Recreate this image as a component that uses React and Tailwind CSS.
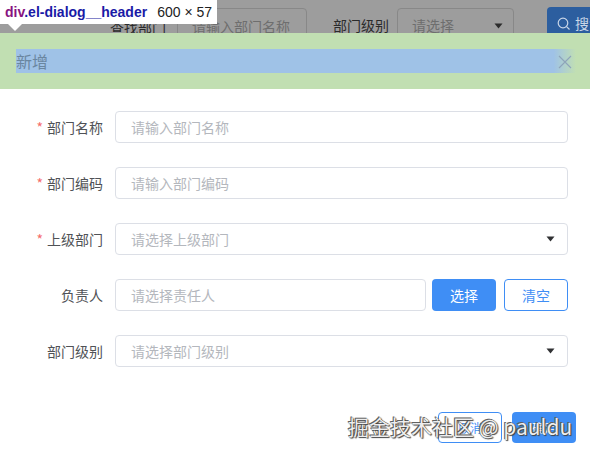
import React from "react";

const cjk = { fontFamily: '"Noto Sans CJK SC", "Noto Sans", sans-serif' };

function Arrow() {
  return (
    <svg width="9" height="6" viewBox="0 0 9 6" className="shrink-0">
      <path d="M0.5 0.5 L8.5 0.5 L4.5 5.5 Z" fill="#303133" />
    </svg>
  );
}

function Row({ label, required, placeholder, select, children }) {
  return (
    <div className="flex items-center h-[32px] mb-6">
      <div className="w-[115px] pr-[12px] text-right text-[14px] text-[#505256] shrink-0">
        {required && <span className="text-[#f56c6c] mr-[4px]">*</span>}
        {label}
      </div>
      {children ? (
        children
      ) : (
        <div className="w-[453px] h-[32px] border border-[#dcdfe6] rounded-[4px] flex items-center justify-between pl-[15px] pr-[12px]">
          <span className="text-[14px] text-[#b4b7bd]">{placeholder}</span>
          {select && <Arrow />}
        </div>
      )}
    </div>
  );
}

export default function App() {
  return (
    <div className="relative w-[590px] h-[453px] overflow-hidden bg-white" style={cjk}>
      {/* masked page behind */}
      <div className="h-[33px] bg-[#9d9d9d] relative overflow-hidden">
        <span className="absolute left-[110px] top-[17px] text-[14px] text-[#2b2b2b]">查找部门</span>
        <div className="absolute left-[177px] top-[8px] w-[130px] h-[32px] border border-[#888] rounded-[4px] pl-[14px] pt-[7px] text-[14px] text-[#6e6e6e]">请输入部门名称</div>
        <span className="absolute left-[333px] top-[15px] text-[14px] text-[#2b2b2b]">部门级别</span>
        <div className="absolute left-[397px] top-[8px] w-[117px] h-[32px] border border-[#888] rounded-[4px] pl-[14px] pr-[10px] flex items-start justify-between pt-[6px]">
          <span className="text-[14px] text-[#6e6e6e]">请选择</span>
          <svg width="9" height="6" viewBox="0 0 9 6" className="mt-[8px]">
            <path d="M0.5 0.5 L8.5 0.5 L4.5 5.5 Z" fill="#2b2b2b" />
          </svg>
        </div>
        <div className="absolute left-[547px] top-[7px] w-[70px] h-[32px] bg-[#2c5e9f] rounded-[4px] flex items-start pt-[6px] pl-[10px] gap-[4px] text-[14px] text-[#c9d6e8]">
          <svg width="14" height="14" viewBox="0 0 14 14" className="mt-[4px]">
            <circle cx="6" cy="6" r="4.8" fill="none" stroke="#c9d6e8" strokeWidth="1.2" />
            <path d="M9.6 9.6 L12.5 12.5" stroke="#c9d6e8" strokeWidth="1.2" />
          </svg>
          <span>搜索</span>
        </div>
      </div>

      {/* tooltip */}
      <div className="absolute left-0 top-0 z-20">
        <div className="w-[217px] h-[24px] bg-white flex items-center pl-[5px] gap-[10px] text-[14px]" style={{ fontFamily: '"Liberation Sans", Arial, sans-serif' }}>
          <span className="font-bold">
            <span className="text-[#881280]">div</span>
            <span className="text-[#1a1aa6]">.el-dialog__header</span>
          </span>
          <span className="text-[#222]">600 × 57</span>
        </div>
        <div className="ml-[8px] w-0 h-0 border-l-[7px] border-r-[7px] border-t-[7px] border-l-transparent border-r-transparent border-t-white" />
      </div>

      {/* dialog header (highlighted) */}
      <div className="relative h-[56px] bg-[#c1dfb2] px-[16px] py-[16px]">
        <div className="w-[560px] h-[24px] bg-[linear-gradient(to_right,#9fc2e7_96%,#c1dfb2)] flex items-center">
          <span className="text-[16px] leading-[24px] text-[#6a86a0]">新增</span>
        </div>
        <svg className="absolute left-[558px] top-[22px]" width="14" height="14" viewBox="0 0 14 14">
          <path d="M1 1 L13 13 M13 1 L1 13" stroke="#8ea4ba" strokeWidth="1.1" />
        </svg>
      </div>

      {/* dialog body */}
      <div className="pt-[22px]">
        <Row label="部门名称" required placeholder="请输入部门名称" />
        <Row label="部门编码" required placeholder="请输入部门编码" />
        <Row label="上级部门" required placeholder="请选择上级部门" select />
        <Row label="负责人">
          <div className="flex items-center">
            <div className="w-[311px] h-[32px] border border-[#dcdfe6] rounded-[4px] flex items-center pl-[15px]">
              <span className="text-[14px] text-[#b4b7bd]">请选择责任人</span>
            </div>
            <button className="ml-[6px] w-[64px] h-[32px] rounded-[4px] bg-[#3f8ef5] text-white text-[14px]">选择</button>
            <button className="ml-[8px] w-[64px] h-[32px] rounded-[4px] border border-[#3f8ef5] bg-white text-[#3f8ef5] text-[14px]">清空</button>
          </div>
        </Row>
        <Row label="部门级别" placeholder="请选择部门级别" select />
      </div>

      {/* footer */}
      <div className="absolute left-0 top-[412px] w-full flex justify-end pr-[14px] gap-[10px]">
        <button className="w-[64px] h-[31px] rounded-[4px] border border-[#3f8ef5] bg-white text-[#3f8ef5] text-[12px]">取消</button>
        <button className="w-[64px] h-[31px] rounded-[4px] bg-[#3f8ef5] text-white text-[12px]">确定</button>
      </div>

      {/* watermark */}
      <div
        className="absolute left-[348px] top-[411px] text-[21px] leading-[30px] text-[#eeeeee] whitespace-nowrap z-10"
        style={{ textShadow: "0 0 1px #333, 1px 1px 1px #444, -1px -1px 0 #666" }}
      >
        掘金技术社区 @ pauldu
      </div>
    </div>
  );
}
